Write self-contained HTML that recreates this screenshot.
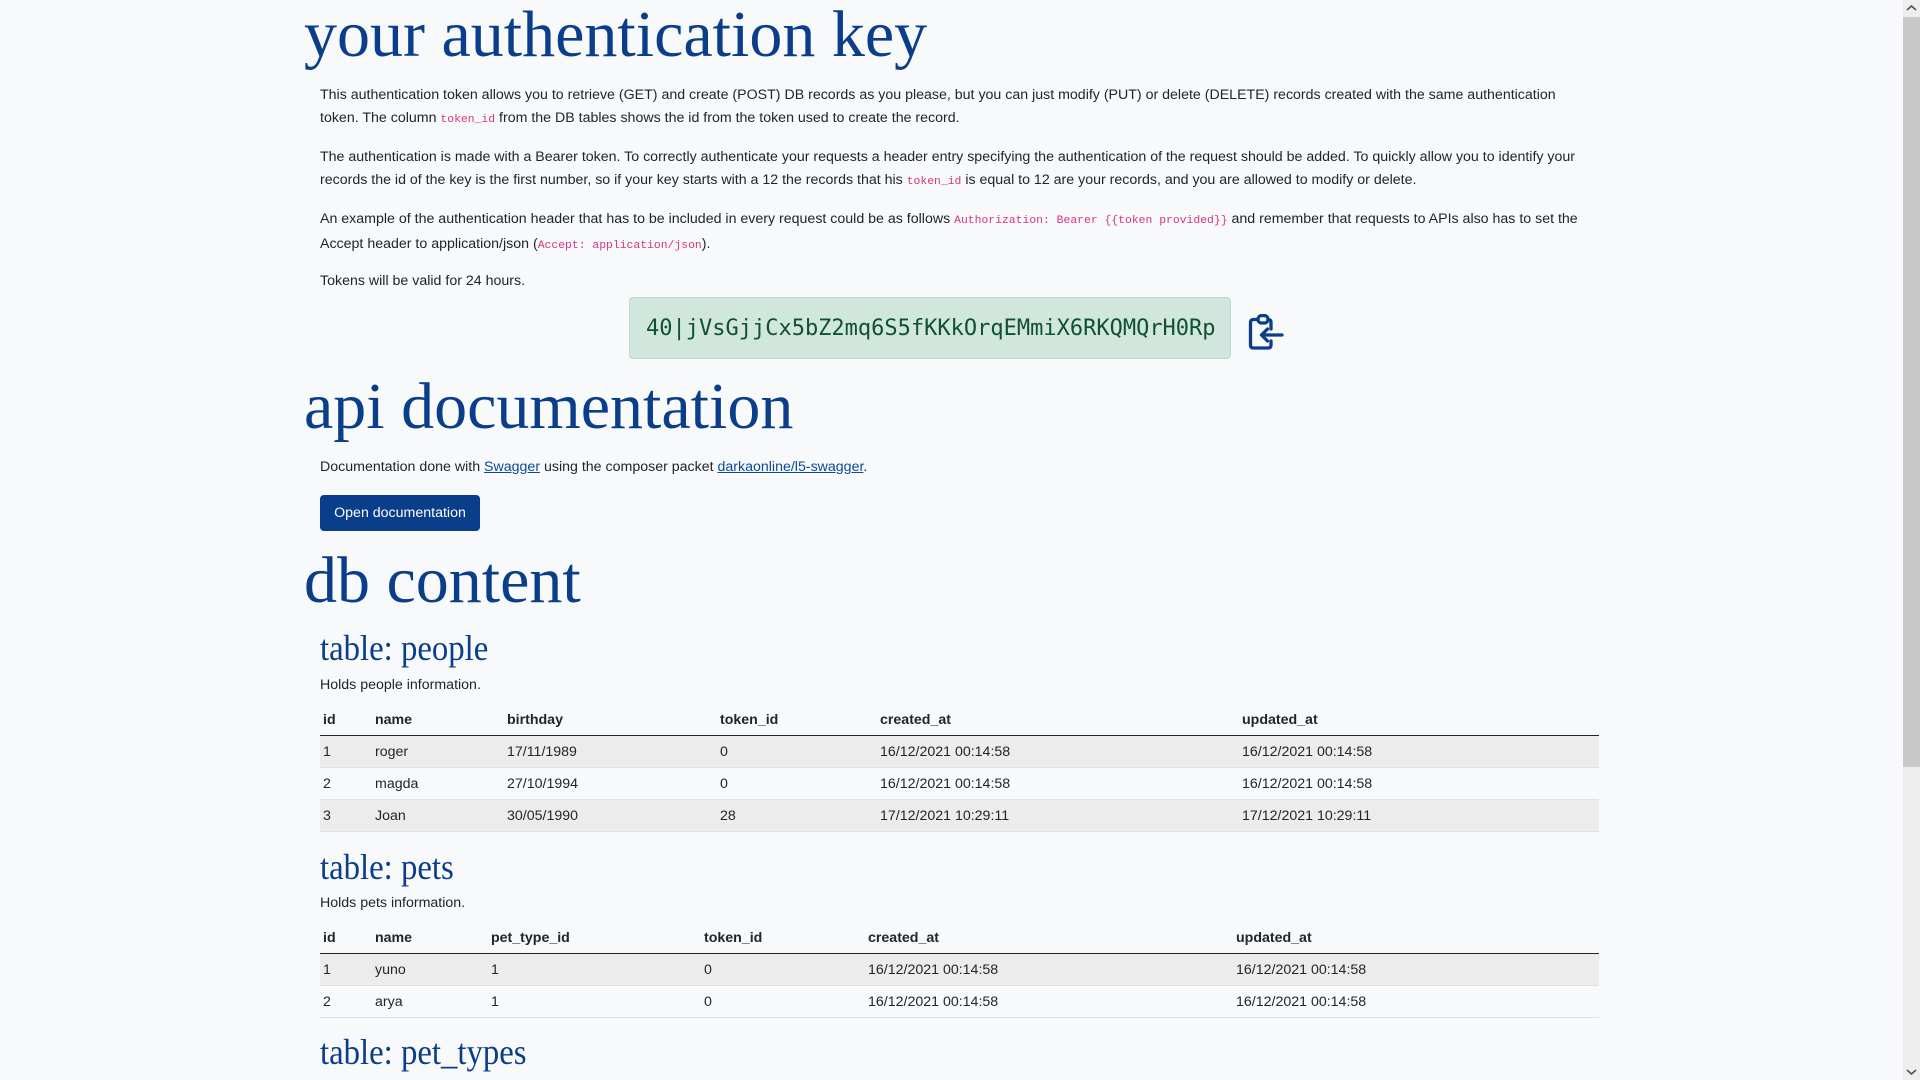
<!DOCTYPE html>
<html><head><meta charset="utf-8"><style>
*{margin:0;padding:0;box-sizing:border-box}
html,body{width:1920px;height:1080px;overflow:hidden;background:#f8f9fa}
body{font-family:"Liberation Sans",Arial,sans-serif;color:#212529;font-size:14.2px;position:relative}
.a{position:absolute;white-space:nowrap}
.h1{font-family:"Liberation Serif",serif;font-size:66px;line-height:1;color:#0a3d8a;transform:scaleX(1.0);transform-origin:0 0;left:304px}
.h3{font-family:"Liberation Serif",serif;font-size:36px;line-height:1;color:#0a3d8a;transform:scaleX(0.91);transform-origin:0 0;left:320px}
.p{left:320px;line-height:23px}
code{font-family:"Liberation Mono",monospace;font-size:11.4px;color:#d63384}
a{color:#0b4a9a;text-decoration:underline}
.tok{left:629px;top:297px;width:602px;height:62px;background:#d1e7dd;border:1px solid #badbcc;border-radius:4px;color:#0f5132;font-family:"DejaVu Sans Mono",monospace;font-size:22px;line-height:62px;padding-left:16px}
.btn{left:320px;top:495px;width:160px;height:36px;background:#0a3d8a;color:#fff;border-radius:4px;text-align:center;line-height:36px;font-size:14.2px}
.t{position:absolute;left:320px;width:1279px}
.r{position:absolute;left:0;width:1279px;height:32px;line-height:32px;border-bottom:1px solid #dee2e6}
.r span{position:absolute;top:0}
.hd{font-weight:bold;border-bottom:1.5px solid #212529}
.s{background:#ececed}
.sb{position:absolute;left:1903px;top:0;width:17px;height:1080px;background:#eeeeee}
.th{position:absolute;left:1903px;top:17px;width:17px;height:750px;background:#c8c8c8}
</style></head><body>
<div class="a h1" style="top:2px">your authentication key</div>
<div class="a p" style="top:84px">This authentication token allows you to retrieve (GET) and create (POST) DB records as you please, but you can just modify (PUT) or delete (DELETE) records created with the same authentication<br>token. The column <code>token_id</code> from the DB tables shows the id from the token used to create the record.</div>
<div class="a p" style="top:146px">The authentication is made with a Bearer token. To correctly authenticate your requests a header entry specifying the authentication of the request should be added. To quickly allow you to identify your<br>records the id of the key is the first number, so if your key starts with a 12 the records that his <code>token_id</code> is equal to 12 are your records, and you are allowed to modify or delete.</div>
<div class="a p" style="top:208px">An example of the authentication header that has to be included in every request could be as follows <code>Authorization: Bearer {{token provided}}</code> and remember that requests to APIs also has to set the<br>Accept header to application/json (<code>Accept: application/json</code>).</div>
<div class="a p" style="top:270px">Tokens will be valid for 24 hours.</div>
<div class="a tok">40|jVsGjjCx5bZ2mq6S5fKKkOrqEMmiX6RKQMQrH0Rp</div>
<svg class="a" style="left:1248px;top:314px" width="36" height="36" viewBox="0 0 36 36" fill="none" stroke="#0a3d8a" stroke-width="3.3" stroke-linecap="round" stroke-linejoin="round">
<path d="M10 5.5H5.5Q2.5 5.5 2.5 8.5V31Q2.5 34 5.5 34H20Q23 34 23 31V27"/>
<path d="M20 5.5H20Q23 5.5 23 8.5V15"/>
<rect x="10" y="1.6" width="10" height="7.4" rx="3.5"/>
<path d="M34 21H13.5M19.5 15L13.5 21L19.5 27"/>
</svg>
<div class="a h1" style="top:374px">api documentation</div>
<div class="a p" style="top:456px">Documentation done with <a>Swagger</a> using the composer packet <a>darkaonline/l5-swagger</a>.</div>
<div class="a btn">Open documentation</div>
<div class="a h1" style="top:548px">db content</div>
<div class="a h3" style="top:630px">table: people</div>
<div class="a p" style="top:674px">Holds people information.</div>
<div class="t" style="top:704px">
<div class="r hd" style="top:0"><span style="left:3px">id</span><span style="left:55px">name</span><span style="left:187px">birthday</span><span style="left:400px">token_id</span><span style="left:560px">created_at</span><span style="left:922px">updated_at</span></div>
<div class="r s" style="top:32px"><span style="left:3px">1</span><span style="left:55px">roger</span><span style="left:187px">17/11/1989</span><span style="left:400px">0</span><span style="left:560px">16/12/2021 00:14:58</span><span style="left:922px">16/12/2021 00:14:58</span></div>
<div class="r" style="top:64px"><span style="left:3px">2</span><span style="left:55px">magda</span><span style="left:187px">27/10/1994</span><span style="left:400px">0</span><span style="left:560px">16/12/2021 00:14:58</span><span style="left:922px">16/12/2021 00:14:58</span></div>
<div class="r s" style="top:96px"><span style="left:3px">3</span><span style="left:55px">Joan</span><span style="left:187px">30/05/1990</span><span style="left:400px">28</span><span style="left:560px">17/12/2021 10:29:11</span><span style="left:922px">17/12/2021 10:29:11</span></div>
</div>
<div class="a h3" style="top:849px">table: pets</div>
<div class="a p" style="top:892px">Holds pets information.</div>
<div class="t" style="top:922px">
<div class="r hd" style="top:0"><span style="left:3px">id</span><span style="left:55px">name</span><span style="left:171px">pet_type_id</span><span style="left:384px">token_id</span><span style="left:548px">created_at</span><span style="left:916px">updated_at</span></div>
<div class="r s" style="top:32px"><span style="left:3px">1</span><span style="left:55px">yuno</span><span style="left:171px">1</span><span style="left:384px">0</span><span style="left:548px">16/12/2021 00:14:58</span><span style="left:916px">16/12/2021 00:14:58</span></div>
<div class="r" style="top:64px"><span style="left:3px">2</span><span style="left:55px">arya</span><span style="left:171px">1</span><span style="left:384px">0</span><span style="left:548px">16/12/2021 00:14:58</span><span style="left:916px">16/12/2021 00:14:58</span></div>
</div>
<div class="a h3" style="top:1034px">table: pet_types</div>
<div class="sb"></div><div class="th"></div>
<svg class="a" style="left:1905px;top:3px" width="13" height="10" viewBox="0 0 13 10"><path d="M2 7L6.5 3L11 7" stroke="#555" stroke-width="1.6" fill="none"/></svg>
<svg class="a" style="left:1905px;top:1067px" width="13" height="10" viewBox="0 0 13 10"><path d="M2 3L6.5 7L11 3" stroke="#555" stroke-width="1.6" fill="none"/></svg>
</body></html>
